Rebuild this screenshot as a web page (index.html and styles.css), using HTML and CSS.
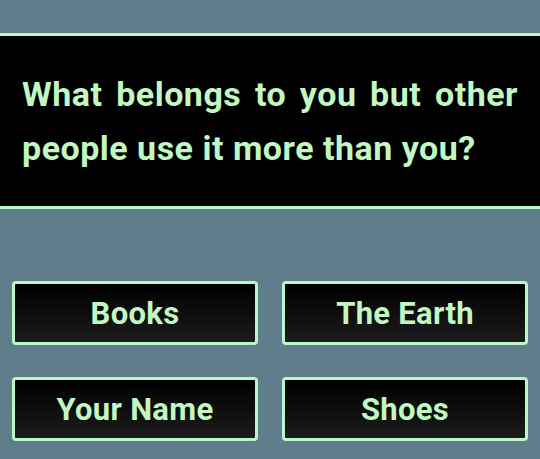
FILE: index.html
```html
<!DOCTYPE html>
<html>
<head>
<meta charset="utf-8">
<link rel="stylesheet" href="styles.css">
</head>
<body>
<div class="page">
  <div class="question">
    <p class="question-text">What belongs to you but other people use it more than you?</p>
  </div>
  <div class="answers">
    <button class="answer">Books</button>
    <button class="answer">The Earth</button>
    <button class="answer">Your Name</button>
    <button class="answer">Shoes</button>
  </div>
</div>
</body>
</html>
```

FILE: styles.css
```css
html, body {
  margin: 0;
  padding: 0;
  background: #607d8b;
  font-family: Roboto, "Liberation Sans", sans-serif;
}
.page {
  width: 540px;
  height: 459px;
  padding-top: 33px;
  box-sizing: border-box;
}
.question {
  background: #000;
  border-top: 3px solid #b9f6ca;
  border-bottom: 3px solid #b9f6ca;
  height: 170px;
  display: flex;
  align-items: center;
  padding: 0 22px;
}
.question-text {
  margin: 0;
  color: #c1f7c0;
  font-size: 34px;
  font-weight: 700;
  letter-spacing: 0.5px;
  line-height: 54px;
  text-align: justify;
}
.answers {
  display: grid;
  grid-template-columns: 1fr 1fr;
  column-gap: 24px;
  row-gap: 32px;
  padding: 72px 12px 0;
}
.answer {
  height: 64px;
  border: 3px solid #b9f6ca;
  border-radius: 4px;
  background: linear-gradient(to bottom, #000 0%, #1c1c1c 100%);
  color: #c1f7c0;
  font-family: Roboto, "Liberation Sans", sans-serif;
  font-size: 31px;
  font-weight: 700;
  letter-spacing: 0.3px;
  padding: 0;
}
```
